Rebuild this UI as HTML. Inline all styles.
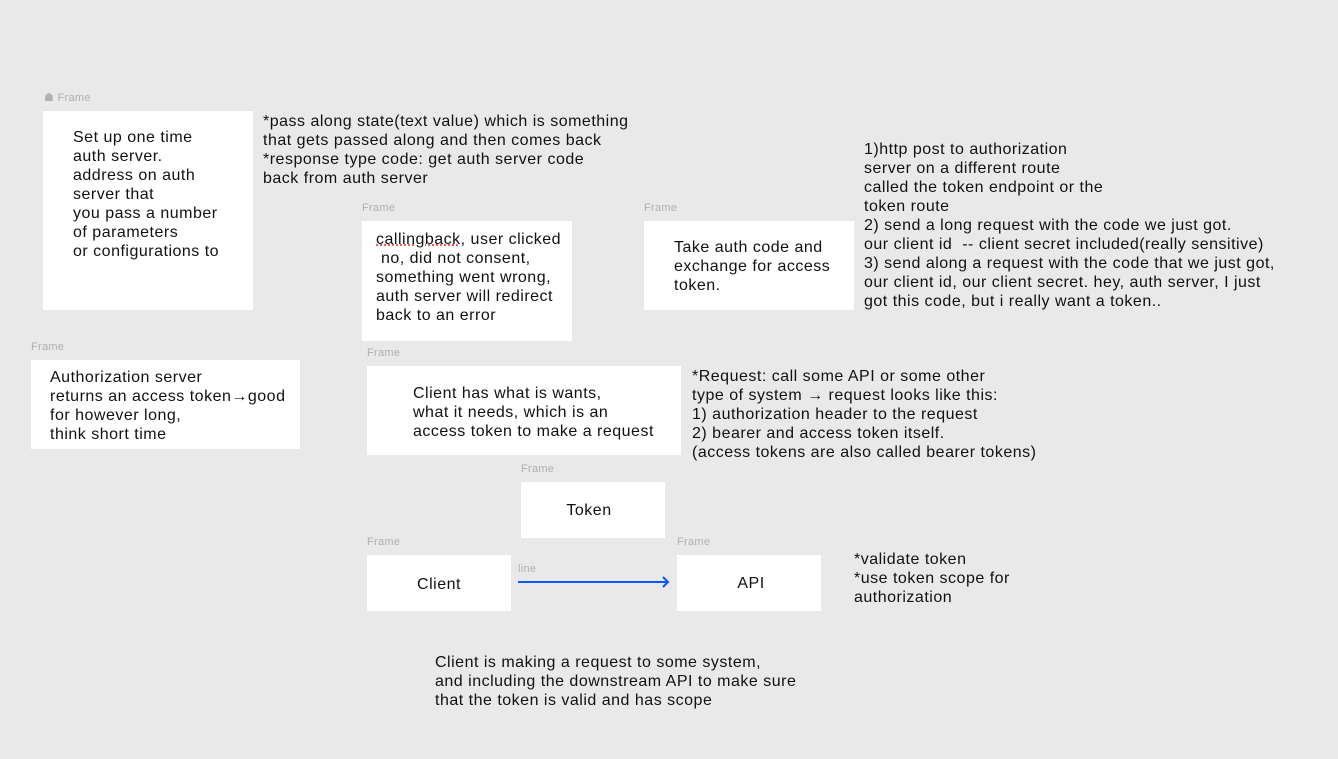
<!DOCTYPE html>
<html><head><meta charset="utf-8"><style>
body{margin:0;width:1338px;height:759px;background:#e9e9e9;position:relative;overflow:hidden;font-family:"Liberation Sans",sans-serif;color:#111}
.b{position:absolute;background:#fff}
.t{position:absolute;font-size:16px;letter-spacing:0.5px;line-height:19px;white-space:pre;margin-top:1px}
.l{position:absolute;font-size:11px;letter-spacing:0.3px;color:#b0b0b0;line-height:13px;margin-top:1px}
</style></head><body>
<div class="l" style="left:44px;top:91px">&#9751; Frame</div>
<div class="b" style="left:43px;top:111px;width:210px;height:199px"></div>
<div class="t" style="left:73px;top:127px">Set up one time
auth server.
address on auth
server that
you pass a number
of parameters
or configurations to</div>
<div class="t" style="left:263px;top:111px">*pass along state(text value) which is something
that gets passed along and then comes back
*response type code: get auth server code
back from auth server</div>

<div class="l" style="left:362px;top:201px">Frame</div>
<div class="b" style="left:362px;top:221px;width:210px;height:120px"></div>
<div class="t" style="left:376px;top:229px"><span style="text-decoration:underline dotted #e33">callingback</span>, user clicked
 no, did not consent,
something went wrong,
auth server will redirect
back to an error</div>

<div class="l" style="left:644px;top:201px">Frame</div>
<div class="b" style="left:644px;top:221px;width:210px;height:89px"></div>
<div class="t" style="left:674px;top:237px">Take auth code and
exchange for access
token.</div>

<div class="t" style="left:864px;top:139px">1)http post to authorization
server on a different route
called the token endpoint or the
token route
2) send a long request with the code we just got.
our client id  -- client secret included(really sensitive)
3) send along a request with the code that we just got,
our client id, our client secret. hey, auth server, I just
got this code, but i really want a token..</div>

<div class="l" style="left:31px;top:340px">Frame</div>
<div class="b" style="left:31px;top:360px;width:269px;height:89px"></div>
<div class="t" style="left:50px;top:367px">Authorization server
returns an access token→good
for however long,
think short time</div>

<div class="l" style="left:367px;top:346px">Frame</div>
<div class="b" style="left:367px;top:366px;width:314px;height:89px"></div>
<div class="t" style="left:413px;top:383px">Client has what is wants,
what it needs, which is an
access token to make a request</div>

<div class="t" style="left:692px;top:366px">*Request: call some API or some other
type of system → request looks like this:
1) authorization header to the request
2) bearer and access token itself.
(access tokens are also called bearer tokens)</div>

<div class="l" style="left:521px;top:462px">Frame</div>
<div class="b" style="left:521px;top:482px;width:144px;height:56px"></div>
<div class="t" style="left:517px;top:500px;width:144px;text-align:center">Token</div>

<div class="l" style="left:367px;top:535px">Frame</div>
<div class="b" style="left:367px;top:555px;width:144px;height:56px"></div>
<div class="t" style="left:367px;top:574px;width:144px;text-align:center">Client</div>

<div class="l" style="left:518px;top:562px">line</div>
<svg style="position:absolute;left:515px;top:572px" width="160" height="20"><path d="M3 10H153M148 5l5 5-5 5" stroke="#0c56ff" stroke-width="2" fill="none"/></svg>

<div class="l" style="left:677px;top:535px">Frame</div>
<div class="b" style="left:677px;top:555px;width:144px;height:56px"></div>
<div class="t" style="left:679px;top:573px;width:144px;text-align:center">API</div>

<div class="t" style="left:854px;top:549px">*validate token
*use token scope for
authorization</div>

<div class="t" style="left:435px;top:652px">Client is making a request to some system,
and including the downstream API to make sure
that the token is valid and has scope</div>
</body></html>
